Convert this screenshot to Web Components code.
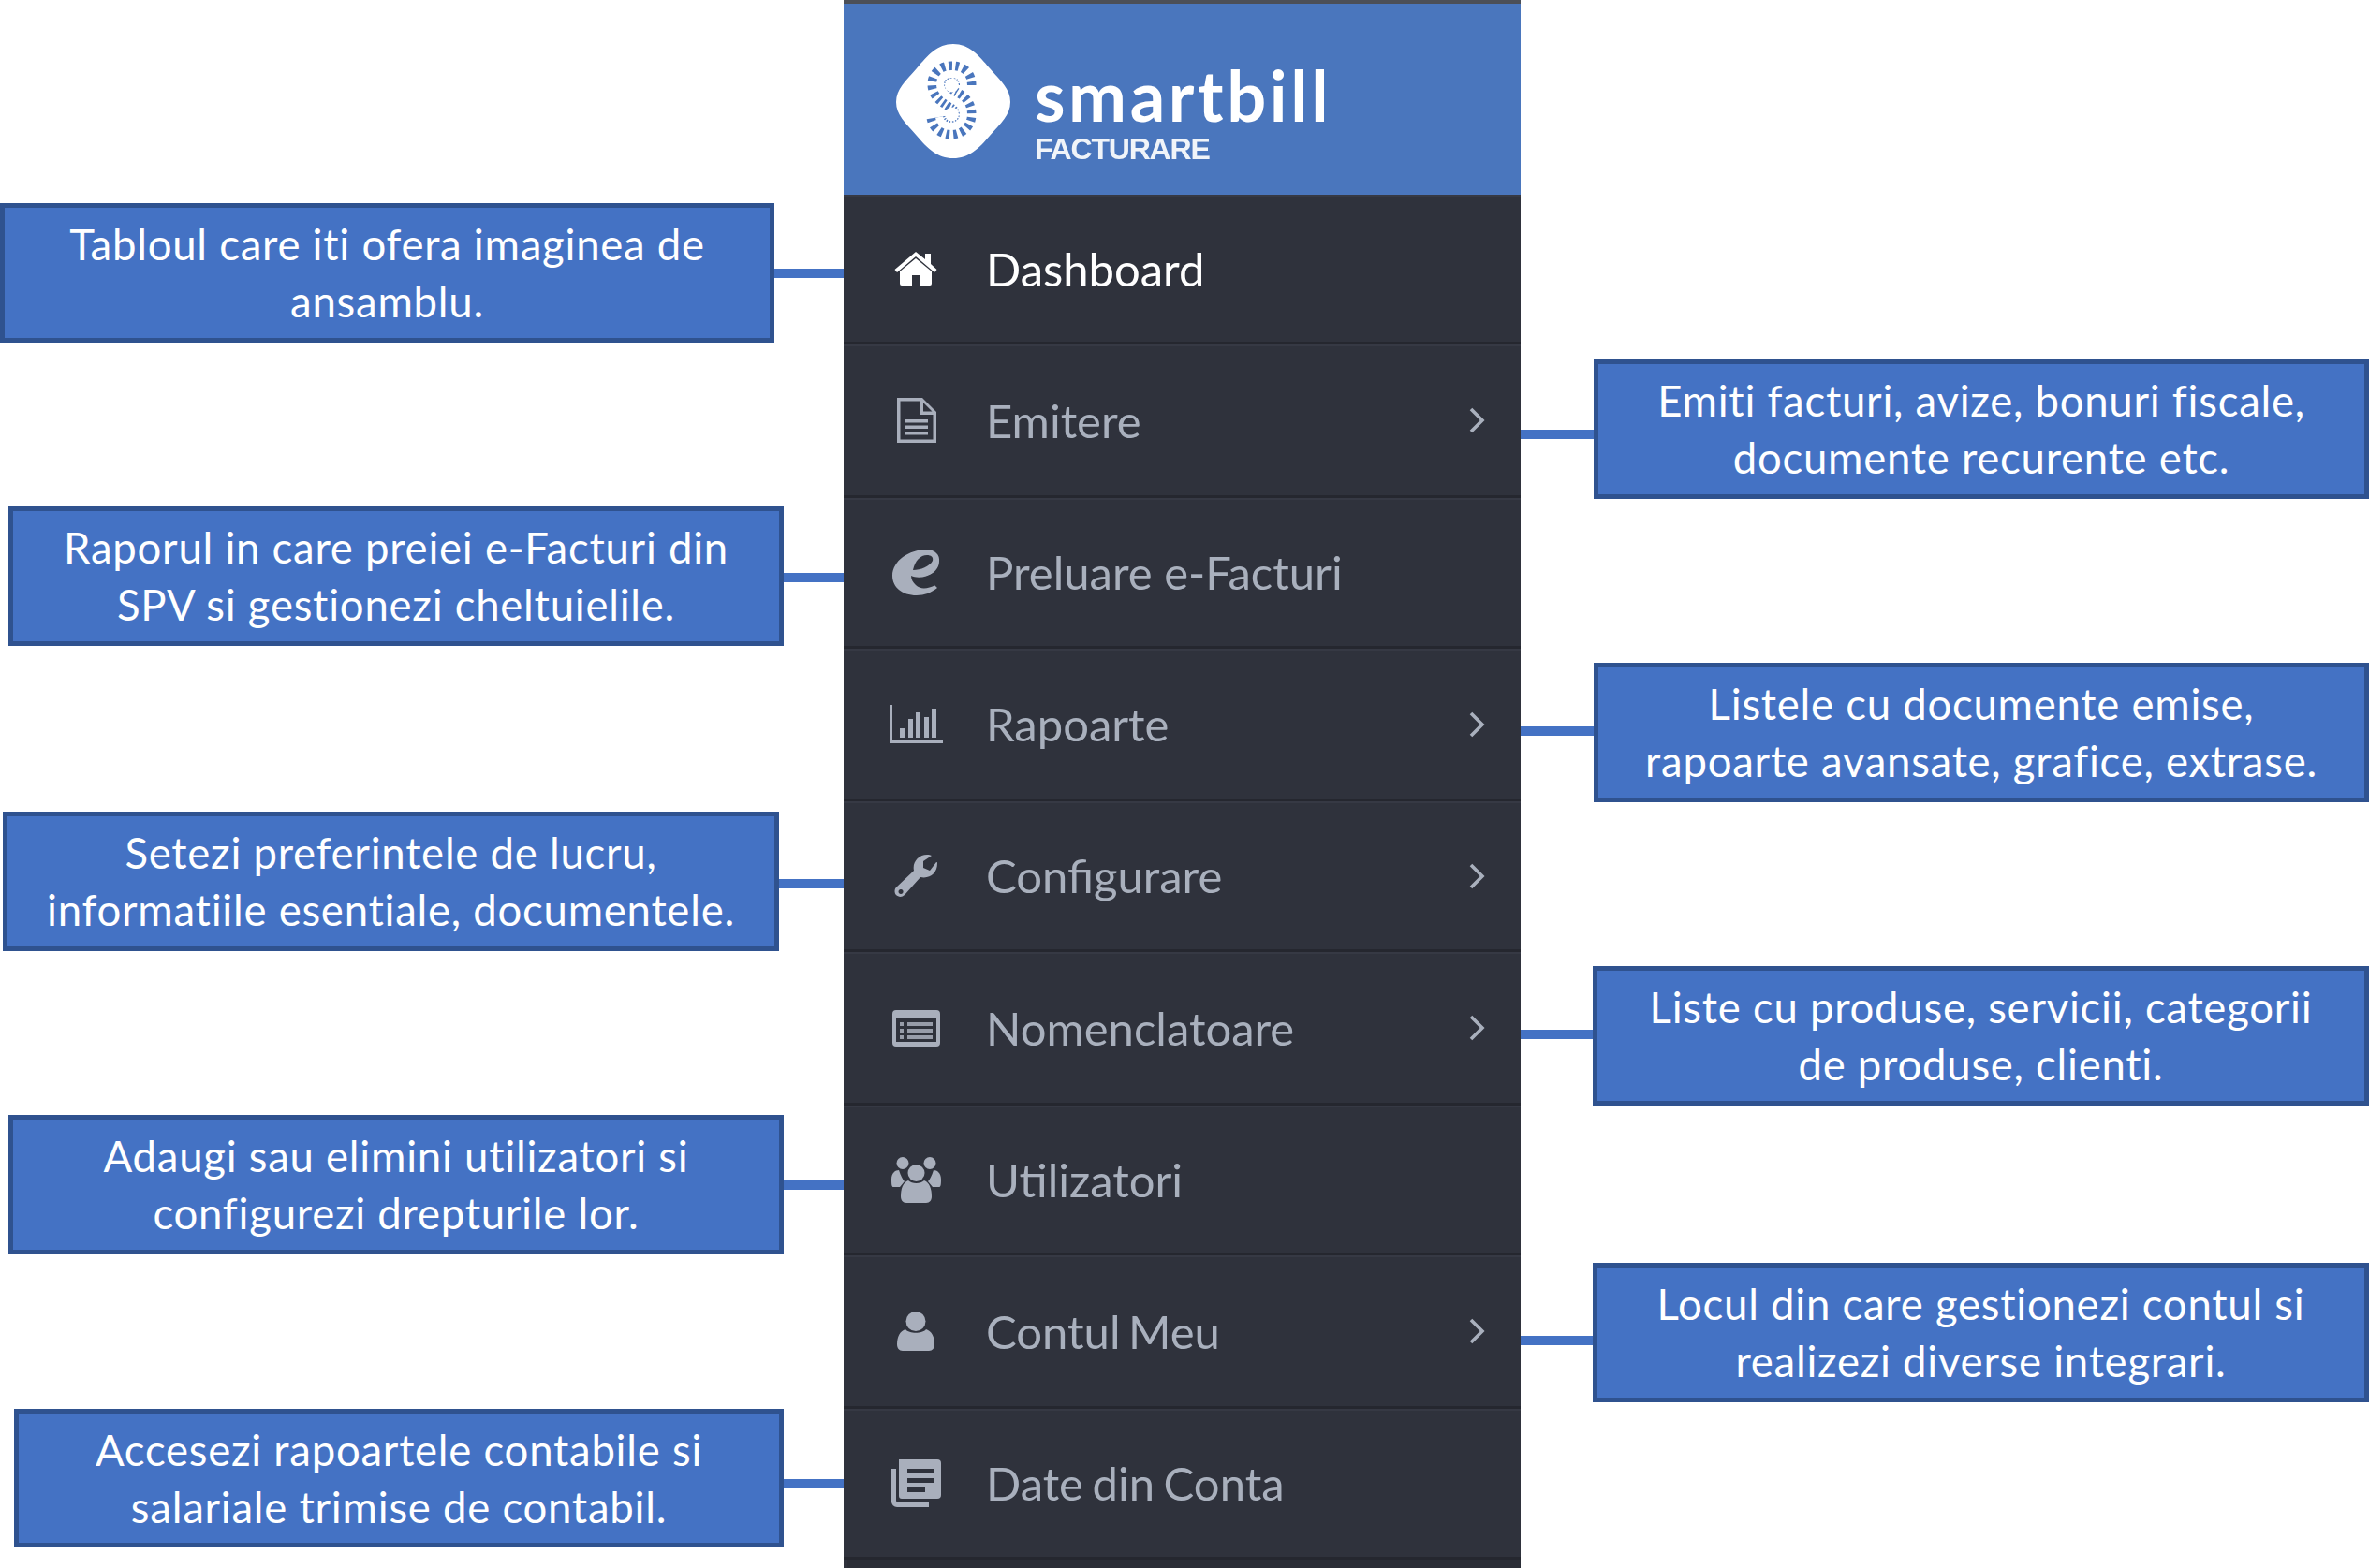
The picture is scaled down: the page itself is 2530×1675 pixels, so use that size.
<!DOCTYPE html>
<html lang="ro">
<head>
<meta charset="utf-8">
<title>SmartBill Facturare</title>
<style>
    html, body { margin: 0; padding: 0; background: #fff; }
    body { width: 2530px; height: 1675px; overflow: hidden; }
</style>
</head>
<body>
<guide-page>
    <call-out slot="left" style="--top:217px;--x:0px;--w:827px;--h:149px;--drop:0px">Tabloul care iti ofera imaginea de<br>ansamblu.</call-out>
    <call-out slot="left" style="--top:175px;--x:9px;--w:828px;--h:149px;--drop:1.5px">Raporul in care preiei e-Facturi din<br>SPV si gestionezi cheltuielile.</call-out>
    <call-out slot="left" style="--top:177px;--x:3px;--w:829px;--h:149px;--drop:2px">Setezi preferintele de lucru,<br>informatiile esentiale, documentele.</call-out>
    <call-out slot="left" style="--top:175px;--x:9px;--w:828px;--h:149px;--drop:0px">Adaugi sau elimini utilizatori si<br>configurezi drepturile lor.</call-out>
    <call-out slot="left" style="--top:165px;--x:15px;--w:822px;--h:148px;--drop:6px">Accesezi rapoartele contabile si<br>salariale trimise de contabil.</call-out>

    <side-nav slot="nav">
        <nav-row style="--h:160px" active><nav-icon slot="icon" name="home"></nav-icon>Dashboard</nav-row>
        <nav-row style="--h:164px" arrow><nav-icon slot="icon" name="doc"></nav-icon>Emitere</nav-row>
        <nav-row style="--h:161px"><nav-icon slot="icon" name="efact"></nav-icon>Preluare e-Facturi</nav-row>
        <nav-row style="--h:163px" arrow><nav-icon slot="icon" name="chart"></nav-icon>Rapoarte</nav-row>
        <nav-row style="--h:161px" arrow><nav-icon slot="icon" name="wrench"></nav-icon>Configurare</nav-row>
        <nav-row style="--h:164px" arrow><nav-icon slot="icon" name="list"></nav-icon>Nomenclatoare</nav-row>
        <nav-row style="--h:160px"><nav-icon slot="icon" name="users"></nav-icon>Utilizatori</nav-row>
        <nav-row style="--h:164px;--ws:-4px" arrow><nav-icon slot="icon" name="user"></nav-icon>Contul Meu</nav-row>
        <nav-row style="--h:161px;--ws:-3px"><nav-icon slot="icon" name="news"></nav-icon>Date din Conta</nav-row>
    </side-nav>

    <call-out slot="right" side="right" style="--top:384px;--w:828px;--h:149px;--drop:5.5px">Emiti facturi, avize, bonuri fiscale,<br>documente recurente etc.</call-out>
    <call-out slot="right" side="right" style="--top:175px;--w:828px;--h:149px;--drop:-1.5px">Listele cu documente emise,<br>rapoarte avansate, grafice, extrase.</call-out>
    <call-out slot="right" side="right" style="--top:175px;--w:829px;--h:149px;--drop:-1.5px">Liste cu produse, servicii, categorii<br>de produse, clienti.</call-out>
    <call-out slot="right" side="right" style="--top:168px;--w:829px;--h:149px;--drop:8.5px">Locul din care gestionezi contul si<br>realizezi diverse integrari.</call-out>
</guide-page>

<script>
class GuidePage extends HTMLElement {
    constructor() {
        super();
        this.attachShadow({mode: 'open'}).innerHTML = `
        <style>
            :host { display: grid; grid-template-columns: 901px 723px 906px; height: 1675px; }
            .col { display: flex; flex-direction: column; align-items: stretch; }
        </style>
        <div class="col"><slot name="left"></slot></div>
        <slot name="nav"></slot>
        <div class="col"><slot name="right"></slot></div>`;
    }
}

class CallOut extends HTMLElement {
    constructor() {
        super();
        this.attachShadow({mode: 'open'}).innerHTML = `
        <style>
            :host {
                display: flex;
                margin-top: var(--top);
                padding-left: var(--x, 0);
                height: var(--h);
                align-items: center;
                font: 400 45.5px/61px Lato, sans-serif;
                letter-spacing: .75px;
                font-variant-ligatures: none;
                color: #fff;
            }
            :host([side="right"]) { flex-direction: row-reverse; }
            .box {
                box-sizing: border-box;
                width: var(--w);
                height: 100%;
                flex: none;
                display: flex;
                align-items: center;
                justify-content: center;
                text-align: center;
                background: #4472c4;
                border: 5px solid #2f528f;
                padding-bottom: 1px;
                white-space: nowrap;
            }
            /* centred flex item, so the margin counts double to move it by --drop */
            .line {
                flex: 1;
                height: 10px;
                margin-top: calc(var(--drop, 0px) * 2);
                background: #4472c4;
            }
        </style>
        <div class="box"><div class="txt"><slot></slot></div></div>
        <div class="line"></div>`;
    }
}

class SideNav extends HTMLElement {
    constructor() {
        super();
        this.attachShadow({mode: 'open'}).innerHTML = `
        <style>
            :host { display: flex; flex-direction: column; background: #2f323c; height: 1675px; overflow: hidden; filter: blur(.6px); }
            .top { height: 4px; background: #4c4f57; flex: none; }
            .head {
                height: 204px;
                flex: none;
                box-sizing: border-box;
                padding: 43px 0 0 56px;
                background: #4a76bd;
                display: flex;
                gap: 26px;
            }
            svg { width: 122px; height: 122px; flex: none; }
            .brand { color: #fff; display: flex; flex-direction: column; }
            .name { font: 700 74px/70px Lato, sans-serif; letter-spacing: 3.6px; margin-top: 20px; }
            .sub { font: 700 32px/32px "Liberation Sans", sans-serif; letter-spacing: -1.2px; margin-top: 6px; opacity: .92; }
            .foot { flex: 1; background: #2b2e37; margin-left: 4px; }
        </style>
        <div class="top"></div>
        <div class="head">
            <svg viewBox="0 0 122 122" aria-hidden="true">
                <path fill="#fff" d="M61 0C78 0 88 12 100 26C112 40 122 48 122 62C122 76 112 84 100 98C88 112 78 122 61 122C44 122 34 112 22 98C10 84 0 76 0 62C0 48 10 40 22 26C34 12 44 0 61 0Z"/>
                <g transform="translate(0 2)">
                    <path fill="none" stroke="#4a76bd" stroke-width="27" stroke-dasharray="2.4 2.5" d="M72 42C72 33 67 30 59 30C51 30 47 35 47 41C47 49 54 53 60 57C67 60 72 65 72 73C72 81 66 86 59 86C52 86 47 82 46 76"/>
                    <circle cx="59.500" cy="42" r="7.500" fill="#fff"/>
                    <circle cx="59.500" cy="73" r="7.500" fill="#fff"/>
                    <path fill="none" stroke="#fff" stroke-width="8" d="M72 42C72 33 67 30 59 30C51 30 47 35 47 41C47 49 54 53 60 57C67 60 72 65 72 73C72 81 66 86 59 86C52 86 47 82 46 76"/>
                </g>
            </svg>
            <div class="brand">
                <div class="name">smartbill</div>
                <div class="sub">FACTURARE</div>
            </div>
        </div>
        <slot></slot>
        <div class="foot"></div>`;
    }
}

class NavRow extends HTMLElement {
    constructor() {
        super();
        this.attachShadow({mode: 'open'}).innerHTML = `
        <style>
            :host {
                display: flex;
                box-sizing: border-box;
                flex: none;
                height: var(--h);
                padding-top: 1px;
                align-items: center;
                font: 400 49px/1 Lato, sans-serif;
                word-spacing: var(--ws, 0);
                color: #a9b0bd;
                border-bottom: 3px solid #25272f;
                box-shadow: inset 0 2px 0 #363944;
            }
            :host([active]) { color: #fff; }
            .ico { width: 152px; flex: none; display: flex; justify-content: center; padding-left: 2px; box-sizing: border-box; }
            .lab { flex: 1; white-space: nowrap; }
            svg { width: 18px; height: 28px; margin-right: 38px; display: none; }
            :host([arrow]) svg { display: block; }
        </style>
        <div class="ico"><slot name="icon"></slot></div>
        <div class="lab"><slot></slot></div>
        <svg viewBox="0 0 18 28" aria-hidden="true"><path d="M3 2L15 14L3 26" fill="none" stroke="#a9b0bd" stroke-width="3.6"/></svg>`;
    }
}

const ICONS = {
    home: [46, 38, `<path d="M23 8L6 22V35a2 2 0 0 0 2 2H19V26H27V37H38a2 2 0 0 0 2-2V22Z"/><path d="M.5 20L23 1 33 9V3H39V14L45.500 20 43 23 23 6 3 23Z"/>`],
    doc: [43, 48, `<path fill-rule="evenodd" d="M1 0H28L43 15V48H1ZM4.500 3.500V44.500H39.500V18H25V3.500ZM29 5V14.500H38.500Z"/><path d="M10 23H34V26.500H10ZM10 29.500H34V33H10ZM10 36H34V39.500H10Z"/>`],
    efact: [51, 49, `<path d="M36 0C46 0 51 6 50 13C50 20 44 26 36 29L48 41C42 46 34 49 26 49C10 49 0 40 0 28C0 12 18 0 36 0Z"/><path fill="#2f323c" d="M37 6C30 6 24 12 22 22C30 22 40 18 43 12C44 8 41 6 37 6Z"/><path fill="#2f323c" d="M20 28C26 31 36 30 44 25L51 25V38L46 38C38 42 30 43 25 38C22 35 20 32 20 28Z"/>`],
    chart: [57, 41, `<path d="M0 0H3V38H57V41H0Z"/><path d="M11 25H16V35H11ZM20 15H25V35H20ZM28 8H33V35H28ZM37 13H42V35H37ZM45 4H50V35H45Z"/>`],
    wrench: [46, 45, `<path fill-rule="evenodd" d="M46 9C46 20 38 26 28 24L11 43C8 46 4 45 2 43C0 41 0 37 2 35L21 17C19 8 26 0 35 0C37 0 39 .5 40 1L31 7V14L38 17 45 8C45.700 8 46 8 46 9ZM7 37A2.500 2.500 0 1 0 7.100 37Z"/>`],
    list: [51, 39, `<path fill-rule="evenodd" d="M4 0H47a4 4 0 0 1 4 4V35a4 4 0 0 1-4 4H4a4 4 0 0 1-4-4V4a4 4 0 0 1 4-4ZM4 9V34H47V9Z"/><path d="M8 13H12V17H8ZM16 13H43V17H16ZM8 20H12V24H8ZM16 20H43V24H16ZM8 27H12V31H8ZM16 27H43V31H16Z" opacity=".85"/>`],
    users: [53, 49, `<circle cx="12" cy="6.500" r="6.500"/><circle cx="41" cy="6.500" r="6.500"/><circle cx="26.500" cy="17" r="9"/><path d="M0 24C0 17 4 14 8 14 10 20 12 24 14 26L9 32H2C.5 32 0 30 0 24ZM53 24C53 17 49 14 45 14 43 20 41 24 39 26L44 32H51C52.500 32 53 30 53 24Z"/><path d="M10 42C10 33 13 27 18 25 22 29 31 29 35 25 40 27 43 33 43 42 43 46 41 49 37 49H16C12 49 10 46 10 42Z"/>`],
    user: [40, 42, `<circle cx="20" cy="10.500" r="10.500"/><path d="M0 35C0 27 3 21 9 19 13 24 27 24 31 19 37 21 40 27 40 35 40 39 38 42 34 42H6C2 42 0 39 0 35Z"/>`],
    news: [53, 51, `<path d="M8 0H49a4 4 0 0 1 4 4V38a4 4 0 0 1-4 4H11a3 3 0 0 1-3-3Z"/><path d="M0 10H5V44a2 2 0 0 0 2 2H40V51H6a6 6 0 0 1-6-6Z"/><path fill="#2f323c" d="M17 10H45V15H17ZM17 20H45V25H17ZM17 30H36V35H17Z"/>`]
};

class NavIcon extends HTMLElement {
    constructor() {
        super();
        const [w, h, paths] = ICONS[this.getAttribute('name')];
        this.attachShadow({mode: 'open'}).innerHTML = `
        <style>
            :host { display: block; line-height: 0; color: inherit; }
            svg { fill: #a9afbc; display: block; }
            :host([name="home"]) svg { fill: #fff; }
        </style>
        <svg width="${w}" height="${h}" viewBox="0 0 ${w} ${h}" aria-hidden="true">${paths}</svg>`;
    }
}

customElements.define('guide-page', GuidePage);
customElements.define('call-out', CallOut);
customElements.define('side-nav', SideNav);
customElements.define('nav-row', NavRow);
customElements.define('nav-icon', NavIcon);
</script>
</body>
</html>
